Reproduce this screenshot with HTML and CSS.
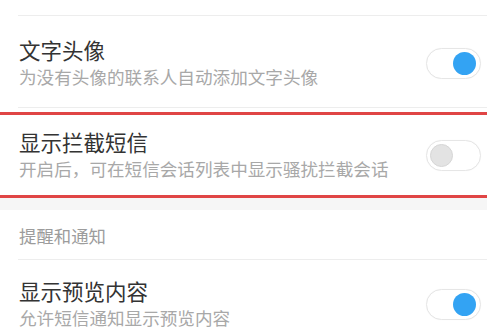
FILE: index.html
```html
<!DOCTYPE html>
<html lang="zh-CN">
<head>
<meta charset="utf-8">
<link rel="stylesheet" href="styles.css">
</head>
<body>
<div class="page">
  <div class="top-space"></div>
  <div class="divider"></div>
  <div class="item item-first">
    <div class="texts">
      <div class="title">文字头像</div>
      <div class="sub">为没有头像的联系人自动添加文字头像</div>
    </div>
    <div class="toggle on"><span class="knob"></span></div>
  </div>
  <div class="divider"></div>
  <div class="gap"></div>
  <div class="item item-marked">
    <div class="texts">
      <div class="title">显示拦截短信</div>
      <div class="sub">开启后，可在短信会话列表中显示骚扰拦截会话</div>
    </div>
    <div class="toggle off"><span class="knob"></span></div>
  </div>
  <div class="band"></div>
  <div class="header">提醒和通知</div>
  <div class="divider"></div>
  <div class="item item-last">
    <div class="texts">
      <div class="title">显示预览内容</div>
      <div class="sub">允许短信通知显示预览内容</div>
    </div>
    <div class="toggle on"><span class="knob"></span></div>
  </div>
</div>
</body>
</html>
```
FILE: styles.css
```css
html, body {
  margin: 0;
  padding: 0;
  background: #ffffff;
}
body {
  font-family: "Noto Sans CJK SC", "Noto Sans", sans-serif;
  overflow: hidden;
}
.page {
  width: 487px;
  height: 329px;
  overflow: hidden;
}
.top-space {
  height: 15px;
}
.divider {
  height: 1px;
  margin-left: 18px;
  background: #ededed;
}
.gap {
  height: 4px;
}
.item {
  display: flex;
  align-items: center;
  justify-content: space-between;
  padding-left: 19px;
  padding-right: 6px;
}
.item-first {
  padding-top: 21px;
  padding-bottom: 18px;
}
.item-marked {
  height: 80px;
  border-top: 3px solid #e04545;
  border-bottom: 3px solid #e04545;
}
.item-last {
  padding-top: 18px;
}
.texts {
  display: flex;
  flex-direction: column;
  gap: 2px;
}
.title {
  font-size: 21.5px;
  line-height: 26px;
  color: #333333;
}
.sub {
  font-size: 17.6px;
  line-height: 24px;
  color: #a8a8a8;
}
.band {
  height: 12px;
  background: #f6f6f6;
}
.header {
  padding: 14px 0 11px 19px;
  font-size: 17.4px;
  line-height: 24px;
  color: #9c9c9c;
}
.toggle {
  position: relative;
  width: 53px;
  height: 29px;
  border: 1px solid #e6e6e6;
  border-radius: 16px;
  background: #ffffff;
  box-shadow: 0 0 1px rgba(0,0,0,0.05);
  flex-shrink: 0;
}
.knob {
  position: absolute;
  top: 3px;
  width: 23px;
  height: 23px;
  border-radius: 50%;
}
.toggle.on .knob {
  right: 4px;
  background: #33a3f3;
}
.toggle.off .knob {
  left: 3px;
  background: #e3e3e3;
  box-sizing: border-box;
  border: 1px solid #d6d6d6;
}
```
